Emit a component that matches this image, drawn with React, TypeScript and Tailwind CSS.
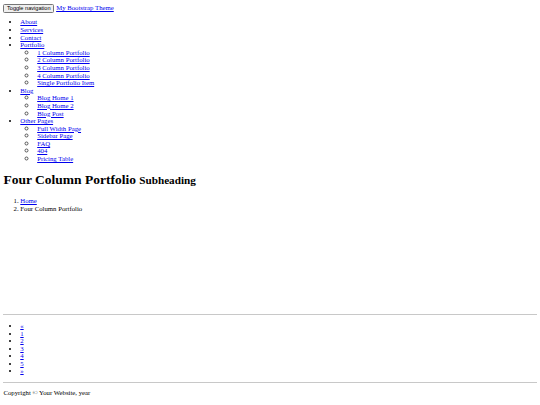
import React from "react";

const A = ({ children }: { children: React.ReactNode }) => (
  <a href="#" className="text-[#0000ee] underline">
    {children}
  </a>
);

export default function App() {
  const sections: { title: string; items?: string[] }[] = [
    { title: "About" },
    { title: "Services" },
    { title: "Contact" },
    {
      title: "Portfolio",
      items: [
        "1 Column Portfolio",
        "2 Column Portfolio",
        "3 Column Portfolio",
        "4 Column Portfolio",
        "Single Portfolio Item",
      ],
    },
    { title: "Blog", items: ["Blog Home 1", "Blog Home 2", "Blog Post"] },
    {
      title: "Other Pages",
      items: ["Full Width Page", "Sidebar Page", "FAQ", "404", "Pricing Table"],
    },
  ];
  const pages = ["«", "1", "2", "3", "4", "5", "»"];
  return (
    <div className="bg-white w-[540px] min-h-[405px] px-[3.4px] pt-[3.4px] font-['Liberation_Serif',serif] text-[6.75px] leading-[7.6px] text-black">
      <div className="flex items-center h-[9.5px]">
        <button className="font-['Liberation_Sans',sans-serif] text-[5.6px] leading-[6px] h-[9px] px-[2.6px] border border-[#767676] bg-[#efefef] rounded-[1.5px] text-black">
          Toggle navigation
        </button>
        <span className="ml-[2px]">
          <A>My Bootstrap Theme</A>
        </span>
      </div>
      <ul className="mt-[5.5px] pl-[16.9px] list-disc">
        {sections.map((s) => (
          <li key={s.title}>
            <A>{s.title}</A>
            {s.items && (
              <ul className="pl-[16.9px] list-[circle] marker:text-[9px] marker:text-[#555] marker:leading-[7.6px]">
                {s.items.map((i) => (
                  <li key={i}>
                    <A>{i}</A>
                  </li>
                ))}
              </ul>
            )}
          </li>
        ))}
      </ul>
      <h1 className="mt-[9px] mb-[9px] text-[13.5px] leading-[15.5px] font-bold">
        Four Column Portfolio <small className="text-[11.2px]">Subheading</small>
      </h1>
      <ol className="pl-[16.9px] list-decimal">
        <li>
          <A>Home</A>
        </li>
        <li>Four Column Portfolio</li>
      </ol>
      <hr className="mt-[101.5px] border-0 border-t border-[#c8c8c8]" />
      <ul className="mt-[7.2px] pl-[16.9px] list-disc leading-[7.5px]">
        {pages.map((p, i) => (
          <li key={i}>
            <A>{p}</A>
          </li>
        ))}
      </ul>
      <hr className="mt-[7.3px] border-0 border-t border-[#c8c8c8]" />
      <p className="mt-[6.5px]">Copyright © Your Website, year</p>
    </div>
  );
}
